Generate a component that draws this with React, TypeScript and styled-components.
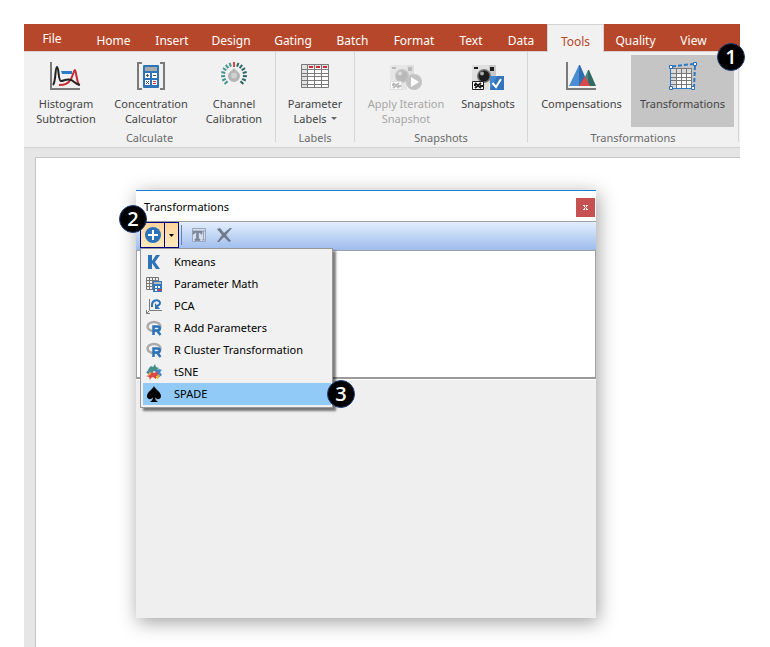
import React from "react";
import styled, { createGlobalStyle, css } from "styled-components";

const GlobalStyle = createGlobalStyle`
  *, *::before, *::after { box-sizing: border-box; }
  html, body, #root { height: 100%; }
  body {
    margin: 0;
    background: #fff;
    color: #444;
    font: 11px/15px "Noto Sans", "Open Sans", sans-serif;
  }
  button { font: inherit; color: inherit; border: 0; background: none; padding: 0; margin: 0; }
`;

/* ---------- layout ---------- */

const Screen = styled.div`
  display: flex;
  flex-direction: column;
  min-height: 100%;
  padding: 24px 30px 0 24px;
`;

const TabBar = styled.div`
  display: flex;
  height: 28px;
  background: #b7472a;
  border-bottom: 1px solid #d5d2d1;
`;

const Tab = styled.button<{ $width: number; $active?: boolean; $file?: boolean }>`
  flex: 0 0 ${(p) => p.$width}px;
  height: 28px;
  padding-top: ${(p) => (p.$file ? 0 : 5)}px;
  margin-right: ${(p) => (p.$file ? 3 : 0)}px;
  color: #fff;
  font-size: 12px;
  white-space: nowrap;
  ${(p) =>
    p.$active &&
    css`
      background: #f1f1f1;
      border: 1px solid #d5d2d1;
      border-bottom: 0;
      color: #b7472a;
    `}
`;

const Ribbon = styled.div`
  display: flex;
  height: 96px;
  background: #f1f1f1;
  border-bottom: 1px solid #d2d2d2;
`;

const Group = styled.section<{ $width: number }>`
  display: flex;
  flex-direction: column;
  flex: 0 0 ${(p) => p.$width}px;
  height: 90px;
  padding-top: 3px;
  border-right: 1px solid #d5d5d5;
`;

const GroupButtons = styled.div<{ $inset?: number }>`
  display: flex;
  padding-left: ${(p) => p.$inset ?? 0}px;
`;

const GroupLabel = styled.h2`
  margin: 3px 0 0;
  font: inherit;
  color: #6a6a6a;
  text-align: center;
`;

const ToolButton = styled.button<{ $width: number }>`
  display: flex;
  flex: 0 0 ${(p) => p.$width}px;
  flex-direction: column;
  align-items: center;
  height: 72px;
  padding-top: 5px;
  white-space: pre;
  color: #444;
  &:disabled { color: #a6a6a6; }
  &[aria-pressed="true"] { background: #c5c5c5; }
`;

const ToolText = styled.span`
  margin-top: 4px;
  text-align: center;
`;

const Caret = styled.span`
  display: inline-block;
  margin: 0 0 3px 4px;
  border: 3px solid transparent;
  border-top-color: #666;
  border-bottom: 0;
`;

const Workspace = styled.main`
  display: flex;
  flex: 1;
  padding: 9px 0 0 11px;
  background: #e6e6e6;
`;

const Page = styled.div`
  flex: 1;
  padding: 32px 144px 29px 100px;
  background: #fff;
  border-top: 1px solid #c6c6c6;
  border-left: 1px solid #c6c6c6;
`;

const Window = styled.section`
  position: relative;
  background: #efefef;
  border-top: 1px solid #1883d7;
  box-shadow: 2px 4px 18px rgba(0, 0, 0, 0.38);
  color: #000;
`;

const TitleBar = styled.header`
  display: flex;
  align-items: center;
  justify-content: space-between;
  height: 31px;
  padding: 0 1px 0 8px;
  background: #fff;
  border-bottom: 1px solid #a0a0a0;
`;

const Title = styled.h1`
  margin: 0;
  font: inherit;
`;

const CloseButton = styled.button`
  display: flex;
  align-items: center;
  justify-content: center;
  width: 19px;
  height: 19px;
  margin-top: 3px;
  background: #c75050;
`;

const Toolbar = styled.div`
  display: flex;
  align-items: center;
  height: 29px;
  padding: 0 4px 2px;
  background: linear-gradient(#e3eefe, #9dbcec);
  border-bottom: 1px solid #a0a0a8;
`;

const SplitButton = styled.div`
  display: flex;
  height: 26px;
  border: 1px solid #000080;
  background: linear-gradient(#ffd49a, #ffeabd);
`;

const SplitPart = styled.button<{ $width: number }>`
  display: flex;
  align-items: center;
  justify-content: center;
  width: ${(p) => p.$width}px;
  & + & { border-left: 1px solid #000080; }
`;

const Divider = styled.span`
  width: 1px;
  height: 20px;
  margin: 0 8px 0 2px;
  background: #6a7fa5;
`;

const IconButton = styled.button`
  display: flex;
  align-items: center;
  justify-content: center;
  width: 18px;
  height: 18px;
  margin-right: 7px;
`;

const ListArea = styled.div`
  height: 128px;
  background: #fff;
  border: 1px solid #a0a0a8;
  border-top: 0;
  border-bottom: 2px solid #9a9a9a;
`;

const DetailArea = styled.div`
  height: 239px;
  border-top: 1px solid #fff;
`;

const Menu = styled.div`
  position: absolute;
  top: 57px;
  left: 4px;
  width: 193px;
  padding: 2px 1px 2px 2px;
  background: #f1f1f1;
  border: 1px solid #979797;
  box-shadow: 3px 3px 2px rgba(0, 0, 0, 0.5);
`;

const MenuItem = styled.button<{ $selected?: boolean }>`
  display: flex;
  align-items: center;
  width: 100%;
  height: 22px;
  padding: 0 0 1px 3px;
  gap: 12px;
  color: #000;
  white-space: nowrap;
  background: ${(p) => (p.$selected ? "#91c9f7" : "transparent")};
`;

const Badge = styled.span`
  position: absolute;
  display: flex;
  align-items: center;
  justify-content: center;
  width: 28px;
  height: 28px;
  border: 1px solid #223f77;
  border-radius: 50%;
  background: #000;
  color: #fff;
  font: 600 20px/24px "Open Sans", "Noto Sans", sans-serif;
`;

const RibbonBadge = styled(Badge)`
  top: -12px;
  right: -11px;
`;
const AddBadge = styled(Badge)`
  top: 14px;
  left: -17px;
`;
const SpadeBadge = styled(Badge)`
  top: 189px;
  left: 191px;
`;
const BadgeHost = styled.div`
  position: relative;
  display: flex;
  flex: none;
`;

/* ---------- ribbon icons ---------- */

const Big = ({ children }: { children: React.ReactNode }) => (
  <svg width="32" height="32" viewBox="0 0 32 32" aria-hidden="true">
    {children}
  </svg>
);

const HistogramIcon = () => (
  <Big>
    <path d="M1 2v27h29" fill="none" stroke="#7a7a7a" strokeWidth="2" />
    <path d="M11 11h11v3h-10z" fill="#2f7ac6" />
    <path d="M9 25c6 0 9-1 12-6 2-4 3-9 4-9s2 13 4 15" fill="none" stroke="#c92b36" strokeWidth="2" />
    <path d="M3 25C6 22 5 7 7 7s1 14 4 14 6-3 10-1c3 1 4 4 9 5" fill="none" stroke="#222" strokeWidth="2" />
  </Big>
);

const ConcentrationIcon = () => (
  <Big>
    <path d="M7 3H3v26h4M25 3h4v26h-4" fill="none" stroke="#7a7a7a" strokeWidth="2" />
    <rect x="8" y="5" width="16" height="23" rx="1" fill="#2d74b9" />
    <path d="M10 7h12v4H10z" fill="#ababab" />
    <path d="M10 13h5v5h-5zM17 13h5v5h-5zM10 20h5v5h-5zM17 20h5v5h-5z" fill="#fff" />
    <path d="M11 15.500h3M12.500 14v3M18 15.500h3M11 21l3 3m0-3-3 3" stroke="#555" />
    <path d="M18 21.500h3M18 23.500h3" stroke="#c92b36" />
  </Big>
);

const ChannelIcon = () => (
  <Big>
    {[-134, -115, -96, -77, -58, -39, -20, 20, 39, 58, 77, 96, 115, 134].map((a) => (
      <path key={a} d="M16 2v4" stroke={a < 0 ? "#46948f" : "#2f6664"} strokeWidth="2" transform={`rotate(${a} 16 15)`} />
    ))}
    <path d="M16 2v5" stroke="#dc4545" strokeWidth="2" />
    <path d="M16 8c1 2 6 4 6 8a6 6 0 0 1-12 0c0-4 5-6 6-8z" fill="#b5b5b5" />
    <circle cx="16" cy="15.500" r="3" fill="#d0d0d0" />
  </Big>
);

const ParameterIcon = () => (
  <Big>
    <path d="M2 4h28v24H2z" fill="#fff" />
    <path d="M2 4h28v4H2zM2 4h7v24H2z" fill="#e2e2e2" />
    <path d="M2.500 4.500h27v23h-27zM8.500 4v24M15.500 4v24M22.500 4v24M2 9.500h28M2 13.500h28M2 16.500h28M2 20.500h28M2 24.500h28" fill="none" stroke="#7a7a7a" />
    <path d="M10 7h4M17 7h4M24 7h4" stroke="#cf2b36" strokeWidth="2" />
  </Big>
);

const CameraIcon = ({ muted }: { muted?: boolean }) => {
  const dark = muted ? "#b9b9b9" : "#1d1d1d";
  return (
    <Big>
      <path d="M0 5h17v25H0z" fill={muted ? "#e6e6e6" : "#e0e0e0"} />
      <path d="M17 5h7v18h-7z" fill={muted ? "#dedede" : "#c9c9c9"} />
      <path d="M2 7h4v2H2zM18 7h4v4h-4z" fill={dark} />
      <circle cx="12" cy="16" r="7" fill={muted ? "#c5c5c5" : "#777"} />
      <circle cx="12" cy="16" r="5.500" fill={dark} />
      <circle cx="10" cy="13.500" r="2" fill={muted ? "#ddd" : "#aaa"} />
      <path d="M.5 21.500h11v8H.5z" fill="#fff" stroke={muted ? "#ddd" : "#1d1d1d"} />
      <path d="M3 23l6 5M9 23l-6 5M2 25h2M8 26h3" stroke={dark} strokeWidth="2" />
      {muted ? (
        <>
          <circle cx="24" cy="22" r="8" fill="#c3c3c3" />
          <path d="M21 17v10l8-5z" fill="#fff" />
        </>
      ) : (
        <>
          <path d="M18 16h14v14H18z" fill="#3275bd" />
          <path d="M18 16h7l-7 14z" fill="#4489d0" />
          <path d="M20.500 23l3.500 4 5-8" fill="none" stroke="#fff" strokeWidth="2" />
        </>
      )}
    </Big>
  );
};

const CompensationIcon = () => (
  <Big>
    <path d="M3 26 13 5h1v21z" fill="#4a8dd3" />
    <path d="M13 5h1l9 21H13z" fill="#2d6db1" />
    <path d="m15 26 7-16h1v16z" fill="#478f86" />
    <path d="M22 10h1l7 16h-8z" fill="#326b66" />
    <path d="m13 26 6-10 5 10z" fill="#db484b" />
    <path d="M1 2v27h29" fill="none" stroke="#7a7a7a" strokeWidth="2" />
  </Big>
);

const TransformIcon = () => (
  <Big>
    <path d="M3 8h22v21H3z" fill="#fff" />
    <path d="M3 8h22v5H3zM3 8h6v21H3z" fill="#dadada" />
    <path d="M3 8.500h21.500V28M3 13.500h22M3 17.500h22M3 20.500h22M3 24.500h22M9.500 8v20M14.500 8v20M19.500 8v20" fill="none" stroke="#777" />
    <path d="M3.500 7v21.500H26" fill="none" stroke="#2d78c4" />
    <path d="M5 6.500 26 4M28 6l-1 21" fill="none" stroke="#2d78c4" strokeWidth="2" strokeDasharray="4 2" />
    <path d="M2.500 5.500h3v3h-3zM26.500 2.500h3v3h-3zM2.500 26.500h3v3h-3zM24.500 26.500h3v3h-3z" fill="#fff" stroke="#2d6db1" />
  </Big>
);

/* ---------- menu and toolbar icons ---------- */

const Small = ({ children }: { children: React.ReactNode }) => (
  <svg width="16" height="16" viewBox="0 0 16 16" aria-hidden="true">
    {children}
  </svg>
);

const KIcon = () => (
  <Small>
    <path d="M2 1h4v6l4-6h4L9 8l5 7h-4L6 9v6H2z" fill="#2d73b8" />
  </Small>
);

const MathIcon = () => (
  <Small>
    <path d="M.5 1.500h12v12H.5zM3.500 1v12M6.500 1v12M9.500 1v12M0 4.500h13M0 7.500h13M0 10.500h13" fill="none" stroke="#777" />
    <path d="M7 5h9v11H7z" fill="#2d78c4" />
    <path d="M8 6h7v2H8z" fill="#bbb" />
    <path d="M9 10h2v2H9zM12 10h2v2h-2zM9 13h2v2H9z" fill="#fff" />
    <path d="M12 13h3v2h-3z" fill="#dc3d3d" />
  </Small>
);

const PcaIcon = () => (
  <Small>
    <path d="M3.500 1v11.500H16M3.500 12.500.5 15.500M.5 12v3.500H4" fill="none" stroke="#7d7d7d" />
    <path d="M6 9V7c0-4 4-6 7-4 2 2 1 4-2 5" fill="none" stroke="#2d73b8" strokeWidth="2" />
    <path d="M9 5v6h5z" fill="#2d73b8" />
  </Small>
);

const RIcon = () => (
  <Small>
    <ellipse cx="8" cy="6.500" rx="6.500" ry="4.500" fill="none" stroke="#ababab" strokeWidth="2.500" />
    <path d="M7.500 15V6.500h4c3 0 3 4 0 4h-4M11 10.500l3.500 4.500" fill="none" stroke="#2d73b8" strokeWidth="2.500" />
  </Small>
);

const TsneIcon = () => (
  <Small>
    <path d="m3 4 2-2 2 1 2-3 1 3 3 1-2 2 1 2-4-1-2 2-2-2-3 1 1-2z" fill="#44918c" />
    <path d="m0 8 4-1 2 2-3 2z" fill="#2d73b8" />
    <path d="m9 7 4-2 3 1-2 2 2 3-4 3-2-2 1-2z" fill="#3e86cd" />
    <path d="m3 8 5 2-1 2-5-1zM8 13l3-3 3 1-2 4z" fill="#e9b62e" />
    <path d="m6 8 2 1 4-2-1 3 2 1-3 1v3l-3-2-2 1-1 2-1-3-3-1 4-1z" fill="#dc4747" />
  </Small>
);

const SpadeIcon = () => (
  <Small>
    <path d="M8 0C7 3 1 6 1 10c0 4 5 4 6 1 0 2-1 4-3 5h8c-2-1-3-3-3-5 1 3 6 3 6-1 0-4-6-7-7-10z" fill="#000" />
  </Small>
);

const AddIcon = () => (
  <Small>
    <circle cx="8" cy="8" r="8" fill="#2b72bb" />
    <path d="M8 3v10M3 8h10" stroke="#fff" strokeWidth="2" />
  </Small>
);

const DropIcon = () => (
  <svg width="5" height="3" viewBox="0 0 5 3" aria-hidden="true">
    <path d="M0 0h5L2.500 3z" fill="#000" />
  </svg>
);

const RenameIcon = () => (
  <Small>
    <path d="M1.500 1.500h13v13h-13z" fill="#d5deed" stroke="#9aa6ba" />
    <path d="M2 4h9v3h-1L9 5.500H7.500V12H9v1.500H4V12h1.500V5.500H4L3 7H2zM11 4h3M12.500 4v9M11 13h3" fill="#7b8799" stroke="#7b8799" strokeWidth=".7" />
  </Small>
);

const DeleteIcon = () => (
  <Small>
    <path d="m1 2 3-1 4 5 6-5h2l-6 7 5 6-2 1-5-5-5 5H1l5-7z" fill="#707988" />
  </Small>
);

const CloseIcon = () => (
  <svg width="5" height="5" viewBox="0 0 5 5" aria-hidden="true">
    <path d="M0 .5h2M3 .5h2M0 4.500h2M3 4.500h2M1 1l3 3M4 1 1 4" stroke="#fff" />
  </svg>
);

/* ---------- data ---------- */

const tabs: { label: string; width: number }[] = [
  { label: "File", width: 56 },
  { label: "Home", width: 61 },
  { label: "Insert", width: 56 },
  { label: "Design", width: 62 },
  { label: "Gating", width: 62 },
  { label: "Batch", width: 57 },
  { label: "Format", width: 66 },
  { label: "Text", width: 48 },
  { label: "Data", width: 52 },
  { label: "Tools", width: 57 },
  { label: "Quality", width: 63 },
  { label: "View", width: 53 },
];

const menuItems: { label: string; icon: React.ReactNode }[] = [
  { label: "Kmeans", icon: <KIcon /> },
  { label: "Parameter Math", icon: <MathIcon /> },
  { label: "PCA", icon: <PcaIcon /> },
  { label: "R Add Parameters", icon: <RIcon /> },
  { label: "R Cluster Transformation", icon: <RIcon /> },
  { label: "tSNE", icon: <TsneIcon /> },
  { label: "SPADE", icon: <SpadeIcon /> },
];

export default function App() {
  return (
    <>
      <GlobalStyle />
      <Screen>
        <TabBar role="tablist">
          {tabs.map((t) => (
            <Tab
              key={t.label}
              role="tab"
              aria-selected={t.label === "Tools"}
              $width={t.width}
              $active={t.label === "Tools"}
              $file={t.label === "File"}
            >
              {t.label}
            </Tab>
          ))}
        </TabBar>
        <Ribbon>
          <Group $width={252}>
            <GroupButtons>
              <ToolButton $width={84}><HistogramIcon /><ToolText>{"Histogram\nSubtraction"}</ToolText></ToolButton>
              <ToolButton $width={86}><ConcentrationIcon /><ToolText>{"Concentration\nCalculator"}</ToolText></ToolButton>
              <ToolButton $width={80}><ChannelIcon /><ToolText>{"Channel\nCalibration"}</ToolText></ToolButton>
            </GroupButtons>
            <GroupLabel>Calculate</GroupLabel>
          </Group>
          <Group $width={79}>
            <GroupButtons>
              <ToolButton $width={78} aria-haspopup="menu">
                <ParameterIcon />
                <ToolText>{"Parameter\nLabels"}<Caret /></ToolText>
              </ToolButton>
            </GroupButtons>
            <GroupLabel>Labels</GroupLabel>
          </Group>
          <Group $width={173}>
            <GroupButtons $inset={6}>
              <ToolButton $width={90} disabled><CameraIcon muted /><ToolText>{"Apply Iteration\nSnapshot"}</ToolText></ToolButton>
              <ToolButton $width={74}><CameraIcon /><ToolText>Snapshots</ToolText></ToolButton>
            </GroupButtons>
            <GroupLabel>Snapshots</GroupLabel>
          </Group>
          <Group $width={211}>
            <GroupButtons $inset={4}>
              <ToolButton $width={99}><CompensationIcon /><ToolText>Compensations</ToolText></ToolButton>
              <BadgeHost>
                <ToolButton $width={103} aria-pressed="true"><TransformIcon /><ToolText>Transformations</ToolText></ToolButton>
                <RibbonBadge>1</RibbonBadge>
              </BadgeHost>
            </GroupButtons>
            <GroupLabel>Transformations</GroupLabel>
          </Group>
        </Ribbon>
        <Workspace>
          <Page>
            <Window aria-label="Transformations">
              <TitleBar>
                <Title>Transformations</Title>
                <CloseButton aria-label="Close"><CloseIcon /></CloseButton>
              </TitleBar>
              <Toolbar role="toolbar">
                <SplitButton>
                  <SplitPart $width={23} aria-label="Add"><AddIcon /></SplitPart>
                  <SplitPart $width={14} aria-label="Add options" aria-expanded="true"><DropIcon /></SplitPart>
                </SplitButton>
                <Divider />
                <IconButton aria-label="Rename"><RenameIcon /></IconButton>
                <IconButton aria-label="Delete"><DeleteIcon /></IconButton>
              </Toolbar>
              <ListArea />
              <DetailArea />
              <Menu role="menu">
                {menuItems.map((m) => (
                  <MenuItem key={m.label} role="menuitem" $selected={m.label === "SPADE"}>
                    {m.icon}
                    {m.label}
                  </MenuItem>
                ))}
              </Menu>
              <AddBadge>2</AddBadge>
              <SpadeBadge>3</SpadeBadge>
            </Window>
          </Page>
        </Workspace>
      </Screen>
    </>
  );
}
